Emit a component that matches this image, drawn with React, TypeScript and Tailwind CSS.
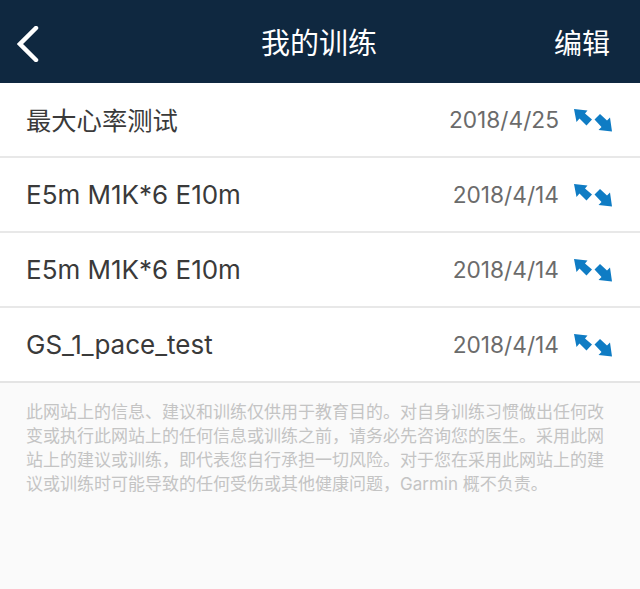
const font = { fontFamily: 'Inter, "Noto Sans CJK SC", sans-serif' };

const workouts = [
  { name: "最大心率测试", date: "2018/4/25", row: "h-[72.5px]", nameSize: "text-[25.3px]" },
  { name: "E5m M1K*6 E10m", date: "2018/4/14", row: "h-[75px]", nameSize: "text-[26px]" },
  { name: "E5m M1K*6 E10m", date: "2018/4/14", row: "h-[75px]", nameSize: "text-[26px]" },
  { name: "GS_1_pace_test", date: "2018/4/14", row: "h-[75px]", nameSize: "text-[26px]" },
];

function SyncIcon() {
  return (
    <svg width="39" height="23" viewBox="0 0 39 23" className="shrink-0">
      <path d="M0 0 L13.5 1.5 L11 4.5 L18 10.5 L12.5 16.5 L5.5 9.5 L2.5 13 Z" fill="#0f7cc4" />
      <path d="M38 22.5 L24.5 21 L27.5 18 L20.5 10.5 L26 5 L33 11.5 L36 8.5 Z" fill="#0f7cc4" />
    </svg>
  );
}

export default function App() {
  return (
    <div style={font} className="flex h-[589px] w-[640px] flex-col overflow-hidden bg-[#fafafa]">
      <header className="flex h-[83px] shrink-0 items-center justify-between bg-[#0f2840] pl-[17px] pr-[30px] pt-[4px] text-white">
        <svg width="22" height="36" viewBox="0 0 22 36">
          <path d="M19 2 L3 18 L19 34" fill="none" stroke="white" strokeWidth="4.5" strokeLinecap="round" strokeLinejoin="miter" />
        </svg>
        <h1 className="pl-[45px] text-[29px] leading-none">我的训练</h1>
        <button className="text-[28px] leading-none">编辑</button>
      </header>
      <ul className="border-b-2 border-[#e4e4e4] bg-white">
        {workouts.map((w, i) => (
          <li
            key={i}
            className={`flex ${w.row} items-center border-t-2 border-[#e8e8e8] pl-[26px] pr-[27px] pt-[2px] first:border-t-0`}
          >
            <span className={`flex-1 ${w.nameSize} leading-none text-[#3a3a3a]`}>{w.name}</span>
            <span className="mr-[15px] text-[22.7px] leading-none text-[#6b6b6b]">{w.date}</span>
            <SyncIcon />
          </li>
        ))}
      </ul>
      <p className="px-[26px] pt-[17px] text-[17px] leading-[24.3px] text-[#c4c4c4]">
        此网站上的信息、建议和训练仅供用于教育目的。对自身训练习惯做出任何改变或执行此网站上的任何信息或训练之前，请务必先咨询您的医生。采用此网站上的建议或训练，即代表您自行承担一切风险。对于您在采用此网站上的建议或训练时可能导致的任何受伤或其他健康问题，Garmin 概不负责。
      </p>
    </div>
  );
}
